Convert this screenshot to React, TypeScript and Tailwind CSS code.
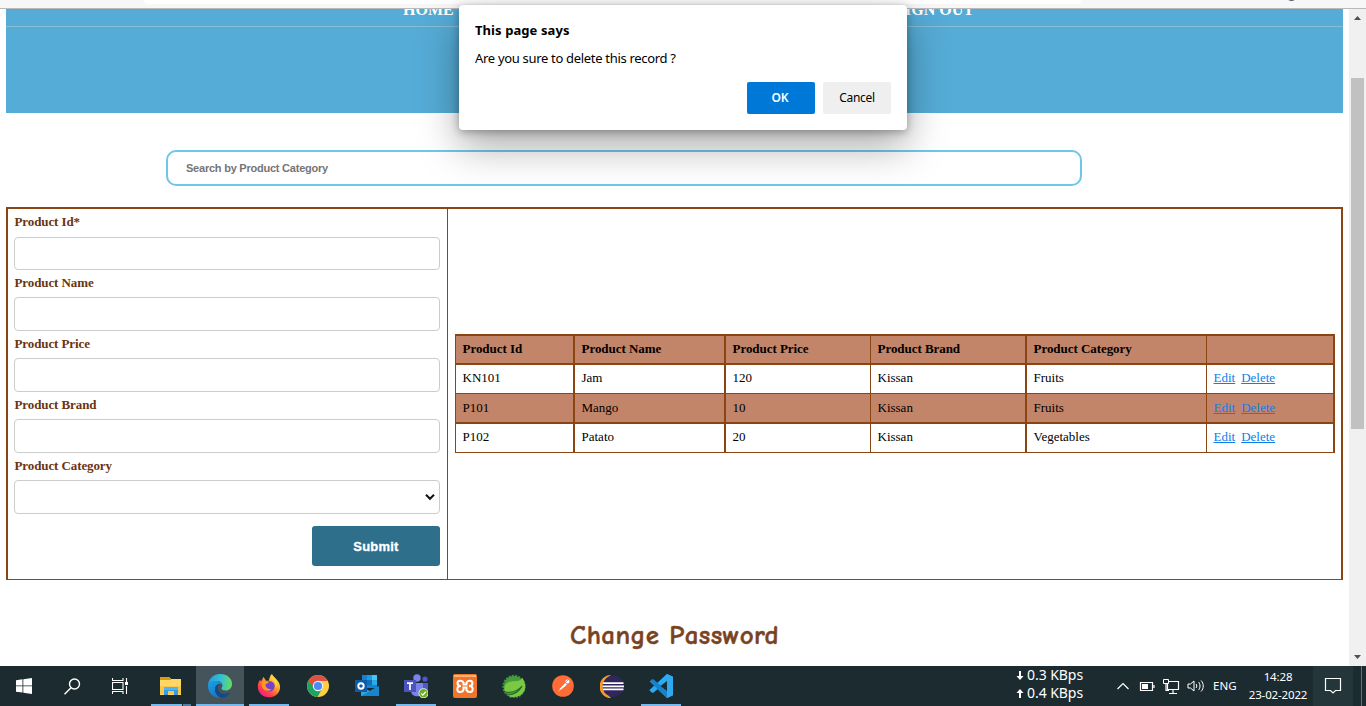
import React from 'react';

function Chrome() {
  return (
    <div className="relative h-[9px] shrink-0 border-b border-[#b9b9b9] bg-[#f7f7f7] pl-36">
      <div className="flex h-[4px] w-[937px] rounded-b-[4px] bg-white" />
      <span className="absolute left-[1286px] top-[-10px] h-[11px] w-[11px] rounded-full bg-[#5c5d6e]" />
    </div>
  );
}

function Banner() {
  return (
    <div className="h-[104px] shrink-0 overflow-hidden bg-[#55acd6]">
      <div className="flex h-[18px] justify-between overflow-hidden border-b border-[#86bdd7] pl-[397px] pr-[369px] font-['Liberation_Serif',serif] text-[16px] font-bold text-white">
        <span className="-mt-[7px] leading-4">HOME</span>
        <span className="-mt-[7px] leading-4">SIGN OUT</span>
      </div>
    </div>
  );
}

function Field({ label, first }: { label: string; first?: boolean }) {
  return (
    <label className="flex flex-col">
      <span className={`pl-[0.5px] text-[13px] font-bold tracking-[-0.1px] text-[#6b3410] ${first ? 'h-[28px] leading-[26px]' : 'h-[27px] leading-[26px]'}`}>{label}</span>
      <input className={`w-full rounded-[4px] border border-[#cccccc] bg-white ${first ? 'h-[33px]' : 'h-[34px]'}`} />
    </label>
  );
}

function ProductForm() {
  return (
    <form className="flex w-[440px] shrink-0 flex-col border-r border-[#8b4513] pl-[6px] pr-[7px]">
      <Field label="Product Id*" first />
      <Field label="Product Name" />
      <Field label="Product Price" />
      <Field label="Product Brand" />
      <span className="h-[27px] pl-[0.5px] text-[13px] font-bold leading-[26px] tracking-[-0.1px] text-[#6b3410]">Product Category</span>
      <div className="flex h-[34px] shrink-0 items-center justify-end rounded-[4px] border border-[#cccccc] pr-[4px]">
        <svg width="10" height="8" viewBox="0 0 10 8"><path d="M1 1.8 5 5.8 9 1.8" fill="none" stroke="#111" strokeWidth="2" /></svg>
      </div>
      <button type="button" className="mt-3 h-10 w-32 self-end rounded-[3px] bg-[#2e6f8b] pt-[1px] font-['Liberation_Sans',sans-serif] text-[13px] font-bold tracking-[0.2px] text-white">
        <span className="[-webkit-text-stroke:0.3px_white]">Submit</span>
      </button>
    </form>
  );
}

const rows = [
  ['KN101', 'Jam', '120', 'Kissan', 'Fruits'],
  ['P101', 'Mango', '10', 'Kissan', 'Fruits'],
  ['P102', 'Patato', '20', 'Kissan', 'Vegetables'],
];
const edges = ['border-r-2', 'border-r-2', 'border-r', 'border-r-2', 'border-r', 'border-r-2'];
const rowCls = ['h-[29px] border-b leading-[26px]', 'h-[30px] border-b-2 bg-[#c38569] leading-[28px]', 'h-[29px] border-b leading-[26px]'];
const cols = 'grid grid-cols-[119px_151px_145px_156px_180px_128px] border-[#8b4513]';

function ProductTable() {
  return (
    <div className="w-[880px] border-l border-t-2 border-[#8b4513] text-[13px] text-black">
      <div className={`${cols} h-[29px] border-b-2 bg-[#c38569] font-bold leading-[26px]`}>
        {['Product Id', 'Product Name', 'Product Price', 'Product Brand', 'Product Category', ''].map((h, i) => (
          <div key={i} className={`border-[#8b4513] pl-[6.5px] tracking-[-0.05px] ${edges[i]}`}>{h}</div>
        ))}
      </div>
      {rows.map((r, n) => (
        <div key={n} className={`${cols} ${rowCls[n]}`}>
          {r.map((c, i) => (
            <div key={i} className={`border-[#8b4513] pl-[6.5px] ${edges[i]}`}>{c}</div>
          ))}
          <div className="flex gap-[6px] border-r-2 border-[#8b4513] pl-[6.5px] text-[#0d7fec]">
            <a className="underline">Edit</a>
            <a className="underline">Delete</a>
          </div>
        </div>
      ))}
    </div>
  );
}

function Scrollbar() {
  return (
    <div className="flex w-[17px] shrink-0 flex-col items-center bg-[#f0f0f0]">
      <svg width="17" height="69" viewBox="0 0 17 69"><path d="M5 11h7L8.500 7z" fill="#505050" /></svg>
      <div className="h-[351px] w-[13px] bg-[#c1c1c1]" />
      <svg className="mt-auto" width="17" height="17" viewBox="0 0 17 17"><path d="M5 6h7L8.500 10z" fill="#505050" /></svg>
    </div>
  );
}

function Dialog() {
  return (
    <div className="absolute left-[459px] top-[5px] flex h-[125px] w-[448px] flex-col rounded-[4px] bg-white px-4 pt-[15px] font-['Noto_Sans',sans-serif] text-black shadow-[0_16px_40px_rgba(0,0,0,0.34),0_2px_8px_rgba(0,0,0,0.3)]">
      <h2 className="text-[13px] font-bold leading-5 tracking-[0.08px]">This page says</h2>
      <p className="mt-2 text-[13px] leading-5 tracking-[-0.31px]">Are you sure to delete this record ?</p>
      <div className="mt-[14px] flex justify-end gap-2">
        <button className="h-8 w-[68px] rounded-[2px] bg-[#0078d7] pr-[2px] text-[12px] font-semibold text-white">OK</button>
        <button className="h-8 w-[68px] rounded-[2px] bg-[#efefef] text-[12px] tracking-[-0.3px]">Cancel</button>
      </div>
    </div>
  );
}

const Ico = ({ children }: { children: React.ReactNode }) => (
  <svg width="24" height="24" viewBox="0 0 24 24" fill="none">{children}</svg>
);

function Folder() {
  return <Ico><path d="M1 3h9l2 2h10v16H1z" fill="#ffd766" /><path d="M1 3h9l2 2v1H1z" fill="#d99a13" /><path d="M1 12h21v8H1z" fill="#f8c84b" /><path d="M5 13h14v8h-4v-4H9v4H5z" fill="#3a9be0" /><path d="M5 13h14v3H5z" fill="#52b4ee" /></Ico>;
}
function Edge() {
  return (
    <Ico>
      <defs>
        <linearGradient id="eg" x1="0" y1="8" x2="24" y2="10" gradientUnits="userSpaceOnUse"><stop stopColor="#259be0" /><stop offset=".55" stopColor="#35c1d5" /><stop offset="1" stopColor="#66df54" /></linearGradient>
        <linearGradient id="eb" x1="3" y1="9" x2="13" y2="24" gradientUnits="userSpaceOnUse"><stop stopColor="#1b99de" /><stop offset="1" stopColor="#1470bf" /></linearGradient>
      </defs>
      <path d="M0 12C0 5 5 0 12 0c8 0 12 5 12 10 0 4-3 6.500-6 6.500-3 0-4.500-1-4.500-2 0-.8 1-1.200 1-3C14.500 9 12 7 9 7c-5 0-8.500 2.500-9 5z" fill="url(#eg)" />
      <path d="M0 12c0-3 4-5 8-5 3 0 5 1.500 6 3.500-4-1.500-7 1-7 4.500 0 5 3.500 8.500 7 8.800C6 25 0 19 0 12z" fill="url(#eb)" />
      <path d="M12.500 9.800C9 10 7 12.500 7 15.500c0 5 4 8.300 7.500 8.300 3.500-.5 6.200-2.500 7.800-5.300-5 2.500-12.500 1.500-12.500-4.500 0-2 1-3.500 2.700-4.200z" fill="#114a8b" />
    </Ico>
  );
}
function Firefox() {
  return (
    <Ico>
      <defs><linearGradient id="ff" x1="20" y1="3" x2="5" y2="22" gradientUnits="userSpaceOnUse"><stop stopColor="#ffe83f" /><stop offset=".4" stopColor="#ff9a25" /><stop offset=".75" stopColor="#ff3c4c" /><stop offset="1" stopColor="#e8208d" /></linearGradient></defs>
      <path d="M15 0c.5 2 3 3.500 5 6 2 2 3.500 5 3 8.500C22 20 17.500 23.300 12 23.300 5.500 23.300.8 18.500.8 12.500c0-3 1-5 2.400-7 0 1 .2 1.500.6 2C5 6 6 4.500 6 3c1.500 1 2.400 2.300 2.800 3.700h3C12.500 4 13 1.500 15 0z" fill="url(#ff)" />
      <circle cx="12.500" cy="12.300" r="5.200" fill="#7740cc" />
      <path d="M5 8c2-1.500 5-1.500 7 .8-1.500.8-3 .8-3.600 2 .4 3 3 5 6.600 4.200-3 3-8 2-9.500-1.500C4.500 11.500 4.500 9.500 5 8z" fill="#ff9820" />
      <path d="M14 5c3.500 1.500 5.500 5 4.500 9 2-2 2.500-5 1-8L15 1z" fill="#ffd33b" />
    </Ico>
  );
}
function ChromeIcon() {
  return (
    <Ico>
      <circle cx="12" cy="12" r="11" fill="#ffcf40" />
      <path d="M2.500 6.500A11 11 0 0 1 21.500 6.500L22 7H12L7.500 14.500z" fill="#dd5144" />
      <path d="M2.500 6.500a11 11 0 0 0 9 16.500l4.700-8.500-7.600.5z" fill="#1ea361" />
      <circle cx="12" cy="12" r="5.200" fill="#f1f1f1" /><circle cx="12" cy="12" r="4.100" fill="#4c8bf5" />
    </Ico>
  );
}
function Outlook() {
  return <Ico><path d="M7 1h15v13H7z" fill="#1781d0" /><path d="M12 1h5v5h-5z" fill="#1c9be5" /><path d="M17 1h5v5h-5z" fill="#4bc3f7" /><path d="M12 6h5v5h-5z" fill="#0f70ba" /><path d="M17 6h5v5h-5z" fill="#2ba9e9" /><path d="M6 13l9 4 9-5v10H6z" fill="#2ba6e6" /><path d="M6 22l18-10v10z" fill="#1784ce" /><path d="M0 6h12v12H0z" fill="#0d5ca8" /><circle cx="6" cy="12" r="2.700" stroke="#fff" strokeWidth="1.900" /></Ico>;
}
function Teams() {
  return <Ico><circle cx="13" cy="4" r="3.700" fill="#7b83eb" /><circle cx="21" cy="5" r="2.600" fill="#5059c9" /><path d="M16 9h8v7c0 4-5 5-8 2z" fill="#5059c9" /><path d="M7 9h12v8c0 7-12 7-12 0z" fill="#7b83eb" /><path d="M0 6h12v12H0z" fill="#4b53bc" /><path d="M3 9.200h6M6 9v7" stroke="#fff" strokeWidth="1.700" /><circle cx="19.500" cy="19.300" r="5" fill="#e8f2dc" /><circle cx="19.500" cy="19.300" r="4.200" fill="#6bae1c" /><path d="m17.300 19.400 1.600 1.700 2.900-3.300" stroke="#fff" strokeWidth="1.300" /></Ico>;
}
function Xampp() {
  return <Ico><rect width="24" height="24" rx="2" fill="#f0742a" /><path d="M1 1h22v2H1z" fill="#ffb27a" /><path d="M10.500 8.500C9 6 4.500 6 4.500 9.200c0 2 1.500 2.800 3.500 2.800-2 0-3.700 1-3.700 3.200 0 3.500 5 3.500 6.200.8V13.500h3V16c1.200 2.700 6.200 2.700 6.200-.8 0-2.200-1.700-3.200-3.700-3.200 2 0 3.500-.8 3.500-2.800C19.500 6 15 6 13.500 8.500v2h-3z" stroke="#fff" strokeWidth="2" /></Ico>;
}
function Spring() {
  return <Ico><circle cx="12" cy="12.500" r="10.700" stroke="#3f8e36" strokeWidth="2" strokeDasharray="2 1.200" /><circle cx="12" cy="12.500" r="10.500" fill="#469b3b" /><path d="M20.500 4c5 8 3 16-5 18.500-4 1-8 .5-10-1.500C13 20.500 18 17 19.500 13 15 18 9 19 3 17.500 1 11.500 4 8 9.500 7.500 14 7 18 7.500 20.500 4z" fill="#7ac943" /><path d="M3 18c7 1 13-1 17-6-3 6-8 9-15 9" stroke="#28692a" strokeWidth="1.200" /></Ico>;
}
function Postman() {
  return <Ico><circle cx="12" cy="12" r="10.800" fill="#ff6c37" /><path d="M6.500 18 14 9.500l1.500 1.500z" fill="#ffd9c9" /><path d="m8.500 15 6-6 1.500 1.500-6 5z" fill="#fff" /><circle cx="16.500" cy="7.500" r="2" fill="#fff" /><path d="m15 8 2-2" stroke="#ff6c37" strokeWidth=".8" /></Ico>;
}
function Eclipse() {
  return <Ico><path d="M11 1a11.500 11.500 0 0 0 0 23C5 19 4 6 11 1z" fill="#f79a28" /><circle cx="13.300" cy="12.300" r="10.700" fill="#30265c" /><path d="M3 9.200h20.500M2.500 12.300h21.500M3 15.400h20.500" stroke="#fff" strokeWidth="1.700" /></Ico>;
}
function VSCode() {
  return <Ico><path d="M18 0 24 2.800v18.400L18 24 5.500 12.600z" fill="#2094db" /><path d="M18 0 1 15.500l-.5 1L3 18.800l1.300-.1L18 7.200z" fill="#2aabf2" /><path d="M18 24 .500 7.500 3 5.200h1.300L18 16.800z" fill="#1684cd" /><path d="M18 7v10l-6.500-5z" fill="#1b2b30" /><path d="M18 0 24 2.800v18.400L18 24z" fill="#31a9ee" /></Ico>;
}

const apps = [
  { icon: <Folder />, cell: 'w-[50px]', bar: 'left-[5px] w-[31px]' },
  { icon: <Edge />, cell: 'w-[48px] bg-[#45545a]', bar: 'left-0 w-[48px]' },
  { icon: <Firefox />, cell: 'w-[50px]', bar: 'left-[5px] w-[40px]' },
  { icon: <ChromeIcon />, cell: 'w-[49px] pr-[2px]', bar: '' },
  { icon: <Outlook />, cell: 'w-[49px] pr-[2px]', bar: '' },
  { icon: <Teams />, cell: 'w-[49px] pr-[2px]', bar: 'left-[4px] w-[40px]' },
  { icon: <Xampp />, cell: 'w-[49px] pr-[2px]', bar: '' },
  { icon: <Spring />, cell: 'w-[49px] pr-[2px]', bar: '' },
  { icon: <Postman />, cell: 'w-[49px] pr-[2px]', bar: '' },
  { icon: <Eclipse />, cell: 'w-[49px] pr-[2px]', bar: '' },
  { icon: <VSCode />, cell: 'w-[49px] pr-[2px]', bar: 'left-[4px] w-[40px]' },
];

function Taskbar() {
  return (
    <div className="flex h-10 shrink-0 bg-[#1b2b30] font-['Noto_Sans',sans-serif] text-white">
      <div className="flex w-12 items-center justify-center">
        <svg width="16" height="16" viewBox="0 0 16 16" fill="#fff"><path d="M0 2.300 6.500 1.300v6.200H0zM7.300 1.200 16 0v7.500H7.300zM0 8.300h6.500v6.300L0 13.700zM7.300 8.300H16V16l-8.700-1.300z" /></svg>
      </div>
      <div className="flex w-12 items-center pl-4">
        <svg width="17" height="17" viewBox="0 0 17 17" fill="none" stroke="#fff" strokeWidth="1.400"><circle cx="10.500" cy="6" r="5" /><path d="M7 9.700.500 16.300" /></svg>
      </div>
      <div className="flex w-[50px] items-center pl-[16px]">
        <svg width="17" height="16" viewBox="0 0 17 16" fill="none" stroke="#fff" strokeWidth="1.100"><path d="M.5 0v2.500h10.500V0M.5 16v-2.500h10.500V16M.5 4.500h10.500v7H.5zM14.500 0v4M14.500 8v8" /><path d="M13 4h3v3h-3z" fill="#fff" stroke="none" /></svg>
      </div>
      {apps.map((a, i) => (
        <div key={i} className={`relative flex items-center justify-center ${a.cell}`}>
          {a.icon}
          {a.bar && <span className={`absolute bottom-0 h-[2px] bg-[#76b9ed] ${a.bar}`} />}
          {i === 0 && <span className="absolute bottom-0 left-[37px] h-[2px] w-2 bg-[#527fa3]" />}
        </div>
      ))}
      <div className="ml-[330px] flex w-[101px] flex-col text-[14px] leading-[18px] tracking-[-0.05px]">
        {[['↓', '0.3 KBps'], ['↑', '0.4 KBps']].map(([a, t]) => (
          <div key={a} className="flex gap-[3px] whitespace-nowrap">
            <svg className="mt-[5px]" width="8" height="9" viewBox="0 0 8 9"><path d={a === '↓' ? 'M3 0h2v5h2.500L4 9 .5 5H3z' : 'M3 9h2V4h2.500L4 0 .5 4H3z'} fill="#fff" /></svg>
            <span>{t}</span>
          </div>
        ))}
      </div>
      <div className="flex flex-1 items-center">
        <svg width="88" height="18" viewBox="0 0 88 18" fill="none" stroke="#fff" strokeWidth="1.200">
          <path d="m.5 12 5.500-5.500 5.500 5.500" />
          <path d="M23.500 5.500h12v8h-12zM37 8v3" /><path d="M25 7h6v5h-6z" fill="#fff" stroke="none" />
          <path d="M50.500 4.500h11v8h-11zM56 13v3M52 16.500h8" /><path d="M46.500 2.500h5v4h-5z" fill="#1b2b30" strokeWidth="1" /><path d="M49 7v6.500h3" />
          <path d="M71 7h2.500l3.500-3v10l-3.500-3H71zM79 7c1 1 1 3 0 4M81.500 5c2 2 2 6 0 8M84 3.500c3 3 3 8 0 11" strokeWidth="1" />
        </svg>
        <span className="ml-[8px] w-[34px] text-[11.500px]">ENG</span>
        <div className="flex w-[62px] flex-col text-center text-[11.500px] leading-[18px] tracking-[-0.15px]"><span>14:28</span><span className="whitespace-nowrap">23-02-2022</span></div>
      </div>
      <div className="flex w-10 items-center justify-center bg-[#24363a]">
        <svg width="18" height="18" viewBox="0 0 18 18" fill="none" stroke="#fff" strokeWidth="1.200"><path d="M1.500 1.500h15v12h-5L9 16 6.500 13.500h-5z" /></svg>
      </div>
      <div className="mr-[4px] w-[9px] border-r border-[#667276]" />
    </div>
  );
}

export default function App() {
  return (
    <div className="relative flex h-[706px] w-[1366px] flex-col overflow-hidden bg-white">
      <Chrome />
      <div className="flex h-[657px] shrink-0">
        <main className="flex flex-1 flex-col pl-[6px] pr-[6px] font-['Liberation_Serif',serif]">
          <Banner />
          <input placeholder="Search by Product Category" className="ml-40 mt-[37px] h-9 w-[916px] shrink-0 rounded-[10px] border-2 border-[#6fc6ea] bg-white pl-[18px] font-['Liberation_Sans',sans-serif] text-[11px] font-bold tracking-[-0.23px] placeholder:text-[#757575]" />
          <div className="mt-[21px] flex h-[373px] shrink-0 border-b border-l-2 border-r-2 border-t-2 border-[#8b4513]">
            <ProductForm />
            <div className="flex flex-1 items-start pl-[7px] pt-[125px]"><ProductTable /></div>
          </div>
          <h1 className="mt-[38px] text-center font-['Comic_Sans_MS','Comic_Neue',Lato,sans-serif] text-[27px] font-bold leading-9 tracking-[0.4px] text-[#7a431f] [-webkit-text-stroke:0.4px_#7a431f]">Change Password</h1>
        </main>
        <Scrollbar />
      </div>
      <Taskbar />
      <Dialog />
    </div>
  );
}
